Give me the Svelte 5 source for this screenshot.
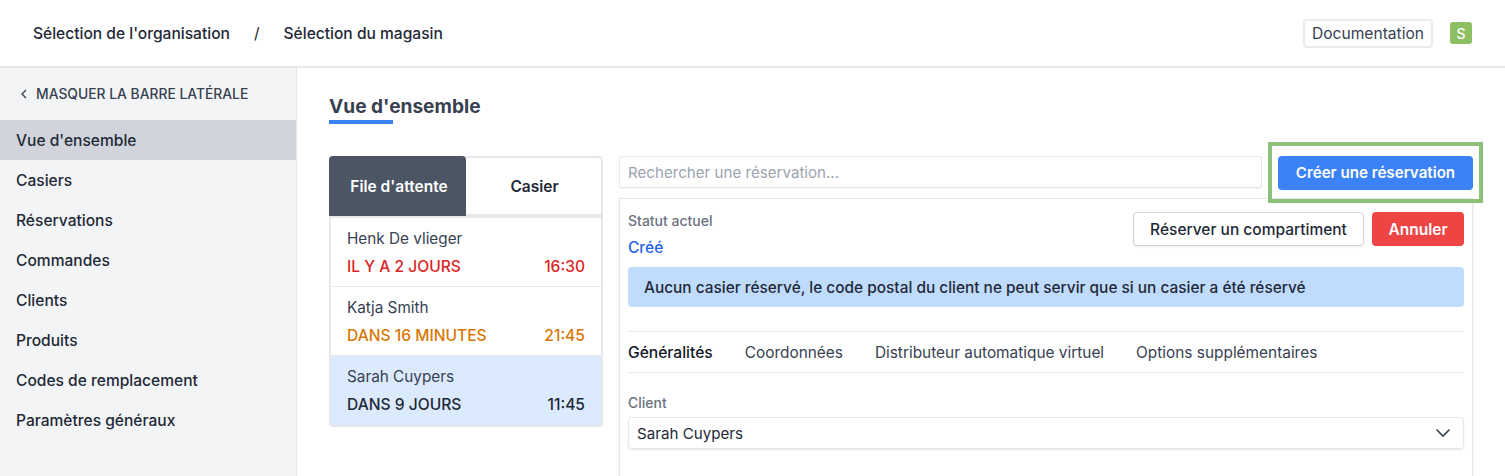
<script>
  const nav = ["Vue d'ensemble", 'Casiers', 'Réservations', 'Commandes', 'Clients', 'Produits', 'Codes de remplacement', 'Paramètres généraux'];
  const queue = [
    { name: 'Henk De vlieger', when: 'IL Y A 2 JOURS', time: '16:30', tone: 'late' },
    { name: 'Katja Smith', when: 'DANS 16 MINUTES', time: '21:45', tone: 'soon' },
    { name: 'Sarah Cuypers', when: 'DANS 9 JOURS', time: '11:45', tone: 'active' }
  ];
  const tabs = ['Généralités', 'Coordonnées', 'Distributeur automatique virtuel', 'Options supplémentaires'];
</script>

<div class="page">
  <header class="topbar">
    <div class="crumbs">
      <span>Sélection de l'organisation</span>
      <span class="slash">/</span>
      <span>Sélection du magasin</span>
    </div>
    <div class="top-right">
      <button class="doc">Documentation</button>
      <span class="avatar">S</span>
    </div>
  </header>

  <div class="body">
    <aside class="sidebar">
      <div class="collapse">
        <svg width="8" height="10" viewBox="0 0 8 10" fill="none" stroke="#374151" stroke-width="1.4"><path d="M6 1 2 5l4 4" /></svg>
        <span>MASQUER LA BARRE LATÉRALE</span>
      </div>
      <nav>
        {#each nav as item, i}
          <div class="nav-item" class:current={i === 0}>{item}</div>
        {/each}
      </nav>
    </aside>

    <main class="main">
      <div class="heading">
        <h1>Vue d'ensemble</h1>
        <div class="underline"></div>
      </div>

      <div class="columns">
        <section class="left">
          <div class="switch">
            <div class="switch-tab on">File d'attente</div>
            <div class="switch-tab">Casier</div>
          </div>
          <div class="queue">
            {#each queue as q}
              <div class="row {q.tone}">
                <div class="name">{q.name}</div>
                <div class="meta"><span>{q.when}</span><span>{q.time}</span></div>
              </div>
            {/each}
          </div>
        </section>

        <section class="right">
          <div class="search-row">
            <input class="search" placeholder="Rechercher une réservation..." />
            <div class="create-wrap">
              <button class="create">Créer une réservation</button>
              <div class="highlight"></div>
            </div>
          </div>

          <div class="card">
            <div class="status-row">
              <div>
                <div class="label">Statut actuel</div>
                <div class="status">Créé</div>
              </div>
              <div class="actions">
                <button class="reserve">Réserver un compartiment</button>
                <button class="cancel">Annuler</button>
              </div>
            </div>

            <div class="alert">Aucun casier réservé, le code postal du client ne peut servir que si un casier a été réservé</div>

            <div class="tabs">
              {#each tabs as t, i}
                <span class:sel={i === 0}>{t}</span>
              {/each}
            </div>

            <div class="label client">Client</div>
            <div class="select">
              <span>Sarah Cuypers</span>
              <svg width="16" height="10" viewBox="0 0 16 10" fill="none" stroke="#374151" stroke-width="1.6"><path d="M1.5 1.5 8 8l6.5-6.5" /></svg>
            </div>
          </div>
        </section>
      </div>
    </main>
  </div>
</div>

<style>
  :global(body) {
    margin: 0;
    background: #fff;
  }
  .page {
    width: 1505px;
    height: 476px;
    overflow: hidden;
    font-family: Inter, "Liberation Sans", sans-serif;
    font-size: 15.5px;
    color: #1f2937;
  }
  button, input {
    font-family: inherit;
    box-sizing: border-box;
  }
  .topbar {
    height: 66px;
    border-bottom: 2px solid #e5e7eb;
    display: flex;
    align-items: center;
    justify-content: space-between;
    padding: 0 33px;
  }
  .crumbs {
    display: flex;
    font-size: 15.57px;
    font-weight: 500;
    gap: 24px;
  }
  .slash {
    font-weight: 400;
  }
  .top-right {
    display: flex;
    align-items: center;
    gap: 17px;
  }
  .doc {
    height: 29px;
    width: 130px;
    background: #fff;
    border: 2px solid #e9ebee;
    border-radius: 4px;
    font-size: 15.6px;
    color: #374151;
    padding: 0;
  }
  .avatar {
    width: 22px;
    height: 22px;
    border-radius: 3px;
    background: #8cc063;
    color: #fff;
    font-size: 14px;
    font-weight: 500;
    display: flex;
    align-items: center;
    justify-content: center;
  }
  .body {
    display: flex;
    height: 408px;
  }
  .sidebar {
    width: 296px;
    flex: none;
    background: #f3f4f6;
    border-right: 1px solid #e5e7eb;
  }
  .collapse {
    height: 52px;
    display: flex;
    align-items: center;
    gap: 8px;
    padding-left: 20px;
    font-size: 13.85px;
    font-weight: 500;
    color: #374151;
  }
  .nav-item {
    height: 40px;
    line-height: 42px;
    padding-left: 16px;
    font-weight: 500;
    font-size: 15.57px;
    color: #1f2937;
  }
  .nav-item.current {
    background: #d1d5db;
  }
  .main {
    flex: 1;
    padding: 0 32px;
    min-width: 0;
  }
  .heading {
    padding-top: 24px;
    height: 64px;
    box-sizing: border-box;
  }
  h1 {
    margin: 0;
    font-size: 19.1px;
    line-height: 28px;
    font-weight: 700;
    color: #374151;
  }
  .underline {
    width: 64px;
    height: 4px;
    background: #3b82f6;
  }
  .columns {
    display: flex;
    gap: 16px;
    margin-top: 24px;
  }
  .left {
    width: 274px;
    flex: none;
  }
  .switch {
    display: flex;
    height: 60px;
    box-sizing: border-box;
    border: 2px solid #e5e7eb;
    border-left: none;
    border-radius: 4px 4px 0 0;
    background: #fff;
  }
  .switch-tab {
    flex: 1;
    display: flex;
    align-items: center;
    justify-content: center;
    font-weight: 600;
    font-size: 15.5px;
  }
  .switch-tab.on {
    flex: none;
    width: 137px;
    box-sizing: border-box;
    padding-left: 3px;
    margin: -2px 2px -2px 0;
    background: #4b5563;
    color: #fff;
    border-radius: 4px 4px 0 0;
  }
  .queue {
    border: 2px solid #e5e7eb;
    border-radius: 0 0 4px 4px;
    overflow: hidden;
  }
  .row {
    height: 69px;
    box-sizing: border-box;
    padding: 10px 16px 0;
    border-bottom: 1px solid #e5e7eb;
  }
  .row:last-child {
    border-bottom: none;
  }
  .name {
    font-size: 15.3px;
    line-height: 22px;
    color: #374151;
  }
  .meta {
    display: flex;
    justify-content: space-between;
    margin-top: 6px;
    line-height: 22px;
    font-weight: 500;
    font-size: 15.6px;
  }
  .late .meta { color: #dc2626; }
  .soon .meta { color: #d97706; }
  .active { background: #dbeafe; }
  .active .meta { color: #1f2937; }
  .right {
    flex: 1;
    min-width: 0;
    width: 854px;
  }
  .search-row {
    display: flex;
    gap: 16px;
    align-items: flex-start;
  }
  .search {
    flex: 1;
    min-width: 0;
    height: 32px;
    border: 1px solid #e5e7eb;
    border-radius: 3px;
    padding: 0 8px;
    font-size: 15.14px;
    box-shadow: 0 1px 2px rgba(0,0,0,.05);
    outline: none;
  }
  .search::placeholder {
    color: #9ca3af;
  }
  .create-wrap {
    position: relative;
    flex: none;
  }
  .create {
    display: block;
    width: 195px;
    height: 34px;
    background: #3b82f6;
    color: #fff;
    border: none;
    border-radius: 4px;
    font-size: 15.15px;
    font-weight: 600;
    padding: 0 0 1px;
  }
  .highlight {
    position: absolute;
    left: -10px;
    right: -10px;
    top: -14px;
    bottom: -13px;
    border: 4px solid #8dc17a;
    pointer-events: none;
  }
  .card {
    margin-top: 8px;
    border: 1px solid #e5e7eb;
    padding: 12px 8px 0;
    height: 290px;
    box-sizing: border-box;
    box-shadow: 0 1px 3px rgba(0,0,0,.08);
  }
  .status-row {
    display: flex;
    justify-content: space-between;
    height: 56px;
  }
  .label {
    font-size: 14px;
    line-height: 20px;
    font-weight: 500;
    color: #6b7280;
  }
  .status {
    margin-top: 6px;
    font-size: 15.5px;
    line-height: 22px;
    font-weight: 500;
    color: #2563eb;
  }
  .actions {
    display: flex;
    gap: 8px;
    padding-top: 1px;
  }
  .actions button {
    height: 34px;
    border-radius: 4px;
    font-size: 15.5px;
    font-weight: 500;
    padding: 0;
  }
  .reserve {
    width: 231px;
    background: #fff;
    border: 1px solid #d1d5db;
    color: #1f2937;
    box-shadow: 0 1px 2px rgba(0,0,0,.08);
  }
  .cancel {
    width: 92px;
    background: #ef4444;
    border: none;
    color: #fff;
    font-weight: 600 !important;
  }
  .alert {
    height: 40px;
    line-height: 42px;
    padding-left: 16px;
    background: #bfdbfe;
    border-radius: 4px;
    font-weight: 500;
    font-size: 15.42px;
    color: #1f2937;
  }
  .tabs {
    display: flex;
    gap: 32px;
    margin-top: 24px;
    height: 40px;
    align-items: center;
    border-top: 1px solid #e5e7eb;
    border-bottom: 1px solid #e5e7eb;
    font-size: 15.4px;
    color: #374151;
  }
  .tabs .sel {
    color: #111827;
    font-weight: 500;
    font-size: 15.6px;
  }
  .client {
    margin-top: 20px;
  }
  .select {
    margin-top: 4px;
    height: 32px;
    box-sizing: border-box;
    border: 1px solid #e5e7eb;
    border-radius: 4px;
    display: flex;
    align-items: center;
    justify-content: space-between;
    padding: 0 12px 0 8px;
    box-shadow: 0 1px 2px rgba(0,0,0,.1);
    font-size: 15.15px;
    color: #1f2937;
  }
</style>
